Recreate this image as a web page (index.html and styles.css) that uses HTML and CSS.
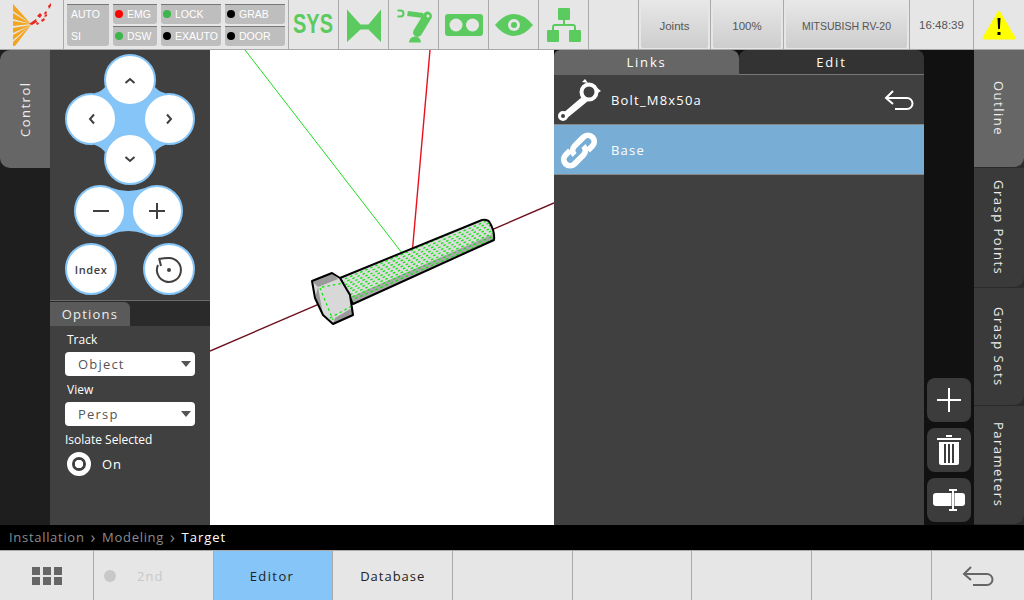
FILE: index.html
```html
<!DOCTYPE html>
<html lang="en">
  <head>
    <meta charset="UTF-8" />
    <title>Modeling - Target</title>
    <link rel="stylesheet" href="styles.css">
  </head>
  <body>
    <header class="topbar">
      <div class="cell logo-cell">
        <svg width="63" height="49" viewBox="0 0 63 49">
          <g fill="#f3a51f">
            <path d="M31 24 13 4v7z" />
            <path d="M31 24 13 13v6z" />
            <path d="M31 24 13 21v5z" />
            <path d="M31 25 13 28v5z" />
            <path d="M31 25 13 35v5z" />
            <path d="M31 25 13 42v4l2 0z" />
          </g>
          <g fill="#e8281f">
            <path d="M29 24l7-5 1 3-5 3z" />
            <path d="M37 16l3-3 2 2-2 3z" />
            <path d="M41 20l3-2 1 2-3 2z" />
            <path d="M44 13l2-2 1 2-2 2z" />
            <path d="M48 6l3-3 0 3-2 3z" />
            <path d="M36 23l2-1 1 2-2 1z" />
            <path d="M44 16l3-2 0 2-2 1z" />
          </g>
        </svg>
      </div>
      <div class="cell status-cell">
        <div class="chip chip-tall"><span>AUTO</span><span>SI</span></div>
        <div class="chip"><i class="led red"></i>EMG</div>
        <div class="chip"><i class="led green"></i>LOCK</div>
        <div class="chip"><i class="led black"></i>GRAB</div>
        <div class="chip"><i class="led green"></i>DSW</div>
        <div class="chip"><i class="led black"></i>EXAUTO</div>
        <div class="chip"><i class="led black"></i>DOOR</div>
      </div>
      <div class="cell sys-cell"><span>SYS</span></div>
      <div class="cell icon-cell">
        <svg width="40" height="40" viewBox="0 0 40 40">
          <path fill="#5ccb5f" d="M3 4.500 16.500 19.500h8L37 4.500V37L24.500 24.500h-8L3 37z" />
        </svg>
      </div>
      <div class="cell icon-cell">
        <svg width="40" height="40" viewBox="0 0 40 40" fill="#5ccb5f">
          <path fill="none" stroke="#5ccb5f" stroke-width="2" d="M3.500 5.500h3a3 3 0 0 1 0 6h-3" />
          <path stroke="#5ccb5f" stroke-width="5" d="M13.500 8.500 29 10.500" />
          <path stroke="#5ccb5f" stroke-width="9" stroke-linecap="round" d="M33.500 11 23.500 27.500" />
          <path d="M15 37.500a6 6 0 0 1 12 0z" />
          <circle cx="34" cy="11" r="1.500" fill="#e6e6e6" />
        </svg>
      </div>
      <div class="cell icon-cell">
        <svg width="40" height="40" viewBox="0 0 40 40">
          <rect x="1" y="9" width="38" height="22" rx="3" fill="#5ccb5f" />
          <circle cx="12" cy="20" r="6.500" fill="#e6e6e6" />
          <circle cx="28.500" cy="20" r="6.500" fill="#e6e6e6" />
        </svg>
      </div>
      <div class="cell icon-cell">
        <svg width="40" height="40" viewBox="0 0 40 40">
          <path fill="#5ccb5f" d="M1 20Q10 9 20 9T39 20Q30 31 20 31T1 20z" />
          <circle cx="20" cy="20" r="6" fill="#e6e6e6" />
          <circle cx="20" cy="20" r="3" fill="#5ccb5f" />
        </svg>
      </div>
      <div class="cell icon-cell">
        <svg width="40" height="40" viewBox="0 0 40 40" fill="#5ccb5f">
          <rect x="14" y="3" width="12" height="12" rx="1" />
          <rect x="3" y="25" width="12" height="12" rx="1" />
          <rect x="25" y="25" width="12" height="12" rx="1" />
          <path fill="none" stroke="#5ccb5f" stroke-width="2" d="M20 15v5M9 25v-3a2 2 0 0 1 2-2h18a2 2 0 0 1 2 2v3" />
        </svg>
      </div>
      <div class="cell blank-cell"></div>
      <div class="cell grad-wrap w-joints"><div class="grad-btn">Joints</div></div>
      <div class="cell grad-wrap w-speed"><div class="grad-btn">100%</div></div>
      <div class="cell grad-wrap w-robot"><div class="grad-btn">MITSUBISH RV-20</div></div>
      <div class="cell clock-cell">16:48:39</div>
      <div class="cell warn-cell">
        <svg width="36" height="32" viewBox="0 0 36 32">
          <path fill="#ffff00" stroke="#ffff00" stroke-width="3" stroke-linejoin="round" d="M18 3.500 33 29H3z" />
          <path fill="#000" d="M16.500 9h3l-.6 11h-1.800zM16.500 23h3v3h-3z" />
        </svg>
      </div>
    </header>

    <main class="main">
      <div class="side-tabs left-tabs">
        <div class="vtab active flip">Control</div>
      </div>

      <section class="control-panel">
        <svg class="pad" width="160" height="250" viewBox="50 50 160 250">
          <path fill="#85c5f8" d="M105 87Q101 92 95 93L95 145Q101 147 105 152L155 152Q159 147 165 145L165 93Q159 92 155 87z" />
          <path fill="#85c5f8" d="M112 188Q128 194 145 188L145 234Q128 228 112 234z" />
          <g fill="#fff" stroke="#85c5f8" stroke-width="2">
            <circle cx="130" cy="80" r="25" />
            <circle cx="91" cy="119" r="25" />
            <circle cx="169" cy="119" r="25" />
            <circle cx="130" cy="159" r="25" />
            <circle cx="100" cy="211" r="25" />
            <circle cx="157" cy="211" r="25" />
            <circle cx="91" cy="269" r="25" />
            <circle cx="169" cy="269" r="25" />
          </g>
          <g fill="none" stroke="#404040" stroke-width="2">
            <path d="M125.500 83l4.500-4 4.500 4" />
            <path d="M94 114.500l-4 4.500 4 4.500" />
            <path d="M167 114.500l4 4.500-4 4.500" />
            <path d="M125.500 157l4.500 4 4.500-4" />
            <path d="M93 211h16M157 203v16M149 211h16" />
            <path d="M159 259Q164 258 169 258A12 12 0 1 1 158 265M159 258 161 266" />
          </g>
          <circle cx="169" cy="270" r="2" fill="#404040" />
          <text class="pad-label" x="91" y="274" text-anchor="middle">Index</text>
        </svg>

        <div class="options">
          <div class="options-head"><span class="options-tab">Options</span></div>
          <div class="options-body">
            <div class="opt-label">Track</div>
            <div class="select"><span>Object</span><i class="caret"></i></div>
            <div class="opt-label">View</div>
            <div class="select"><span>Persp</span><i class="caret"></i></div>
            <div class="opt-label iso">Isolate Selected</div>
            <div class="radio-row"><i class="radio"></i><span>On</span></div>
          </div>
        </div>
      </section>

      <section class="viewport">
        <svg width="344" height="475" viewBox="210 50 344 475">
          <defs>
            <clipPath id="shaft">
              <path d="M340 278 482 220Q488 219 490 223 495 232 494 240L353 304z" />
            </clipPath>
          </defs>
          <path d="M210 351 554 203" stroke="#6d0f1e" stroke-width="1.400" />
          <path d="M245 50 402 253" stroke="#1fdc1f" />
          <path d="M430 50 412 255" stroke="#e8101c" stroke-width="1.400" />
          <path d="M340 278 482 220Q488 219 490 223 495 232 494 240L353 304z" fill="#dcdcdc" />
          <path d="M353 304 494 240 493 234 351 297z" fill="#a8a8a8" />
          <g clip-path="url(#shaft)" class="mesh">
            <path class="dash-a" d="M340 281 495 214.400M340 287 495 220.400M340 293 495 226.400M340 299 495 232.400M340 305 495 238.400" />
            <path class="dash-b" d="M340 284 495 217.400M340 290 495 223.400M340 296 495 229.400M340 302 495 235.400" />
          </g>
          <path d="M340 278 482 220Q488 219 490 223 495 232 494 240L353 304z" fill="none" stroke="#000" stroke-width="2" stroke-linejoin="round" />
          <path d="M312 281 332 273 340 278 350 295 353 315 333 324 323 315 315 298z" fill="#d8d8d8" />
          <path d="M312 281 332 273 338 279 318 287zM323 315 318 287 315 298zM333 324 353 315 352 308 335 318z" fill="#9a9a9a" />
          <g class="mesh">
            <path class="dash-a" d="M320 288 333 320M322 287 344 283M330 318 352 306" />
          </g>
          <path d="M312 281 332 273 340 278 350 295 353 315 333 324 323 315 315 298z" fill="none" stroke="#000" stroke-width="2" stroke-linejoin="round" />
        </svg>
      </section>

      <section class="links-panel">
        <div class="link-tabs">
          <div class="link-tab on">Links</div>
          <div class="link-tab off">Edit</div>
        </div>
        <div class="link-row">
          <svg class="row-icon" width="46" height="46" viewBox="0 0 46 46">
            <circle cx="33" cy="15" r="7.500" fill="none" stroke="#fff" stroke-width="4" />
            <path fill="#fff" d="M26 5l3-3 3 4zM40 10l5 4-5 3zM26 20l6 4L10 42l-4-5z" />
            <circle cx="7" cy="39" r="3.500" fill="#404040" stroke="#fff" stroke-width="3" />
          </svg>
          <span class="row-name">Bolt_M8x50a</span>
          <svg class="back" width="30" height="22" viewBox="0 0 30 22">
            <path fill="none" stroke="#fff" stroke-width="2" d="M9 2 2 9l7 6M2 9h21a5.500 5.500 0 0 1 0 11H11" />
          </svg>
        </div>
        <div class="link-row selected">
          <svg class="row-icon" width="46" height="46" viewBox="0 0 46 46">
            <g transform="translate(23 23.500) rotate(-45) scale(1.050)" fill="none" stroke="#fff" stroke-width="5.500">
              <path d="M-6 -6H-12a6 6 0 0 0 0 12H0a6 6 0 0 0 6-6" />
              <path d="M6 6H12a6 6 0 0 0 0-12H0a6 6 0 0 0-6 6" />
            </g>
          </svg>
          <span class="row-name">Base</span>
        </div>
      </section>

      <aside class="tool-col">
        <button class="tool">
          <svg width="28" height="28" viewBox="0 0 28 28">
            <path stroke="#fff" stroke-width="2" d="M14 2v24M2 14h24" />
          </svg>
        </button>
        <button class="tool">
          <svg width="28" height="32" viewBox="0 0 28 32" fill="#fff">
            <path d="M11 1h6v2h-6zM2 4h24v2H2z" />
            <path d="M4 8h20v21a2 2 0 0 1-2 2H6a2 2 0 0 1-2-2z" />
            <path fill="#3c3c3c" d="M9 10h2v19H9zM13 10h2v19h-2zM17 10h2v19h-2z" />
          </svg>
        </button>
        <button class="tool">
          <svg width="34" height="24" viewBox="0 0 34 24">
            <rect x="1" y="5" width="32" height="13" rx="3" fill="#fff" />
            <path stroke="#3c3c3c" stroke-width="3" d="M21 2v20" />
            <path stroke="#fff" stroke-width="2" d="M17 2h8M17 22h8M21 2v20" />
          </svg>
        </button>
      </aside>

      <div class="side-tabs right-tabs">
        <div class="vtab active h-outline">Outline</div>
        <div class="vtab h-points">Grasp Points</div>
        <div class="vtab h-sets">Grasp Sets</div>
        <div class="vtab h-params">Parameters</div>
      </div>
    </main>

    <div class="crumbs">
      <span>Installation</span><b>›</b><span>Modeling</span><b>›</b><span class="here">Target</span>
    </div>

    <footer class="bottombar">
      <div class="bcell">
        <svg width="30" height="20" viewBox="0 0 30 20" fill="#666">
          <path d="M0 1h8v8H0zM11 1h8v8h-8zM22 1h8v8h-8zM0 11h8v8H0zM11 11h8v8h-8zM22 11h8v8h-8z" />
        </svg>
      </div>
      <div class="bcell second"><i class="dot"></i><span>2nd</span></div>
      <div class="bcell on">Editor</div>
      <div class="bcell">Database</div>
      <div class="bcell"></div>
      <div class="bcell"></div>
      <div class="bcell"></div>
      <div class="bcell"></div>
      <div class="bcell last">
        <svg width="32" height="22" viewBox="0 0 32 22">
          <path fill="none" stroke="#666" stroke-width="2" d="M9 2 2 9l7 6M2 9h23a5.500 5.500 0 0 1 0 11H11" />
        </svg>
      </div>
    </footer>
  </body>
</html>
```

FILE: styles.css
```css
html, body {
  margin: 0;
  padding: 0;
}

body {
  width: 1024px;
  height: 600px;
  overflow: hidden;
  display: flex;
  flex-direction: column;
  font-family: "Open Sans", sans-serif;
  background: #000;
}

/* top bar */
.topbar {
  height: 49px;
  flex: none;
  display: flex;
  background: #e6e6e6;
  border-bottom: 1px solid #a8a8a8;
  font-family: "Liberation Sans", sans-serif;
}

.cell {
  flex: none;
  box-sizing: border-box;
  width: 50px;
  height: 49px;
  border-right: 1px solid #aaa;
  display: flex;
  align-items: center;
  justify-content: center;
}

.logo-cell { width: 64px; }

.status-cell {
  width: 225px;
  display: grid;
  grid-template-columns: 42px 44px 60px 60px;
  grid-template-rows: 20px 20px;
  column-gap: 4px;
  row-gap: 2px;
  align-items: stretch;
  align-content: center;
  justify-content: center;
}

.chip {
  display: flex;
  align-items: center;
  gap: 4px;
  padding-left: 2px;
  background: #bebebe;
  border-top: 1px solid #777;
  border-radius: 0 0 3px 3px;
  box-sizing: border-box;
  color: #fff;
  font-size: 10.500px;
}

.chip-tall {
  grid-row: 1 / 3;
  flex-direction: column;
  align-items: flex-start;
  justify-content: space-around;
  padding-left: 4px;
}

.led {
  width: 8px;
  height: 8px;
  border-radius: 50%;
  flex: none;
}
.led.red { background: #f00; }
.led.green { background: #3cb54a; }
.led.black { background: #000; }

.sys-cell {
  color: #5ccb5f;
  font-size: 27px;
  font-weight: bold;
}

.sys-cell span {
  display: inline-block;
  transform: scaleX(0.74);
}

.blank-cell { width: 50px; }

.grad-wrap {
  padding: 0 2px 1px 2px;
  font-size: 11.500px;
  color: #555;
}
.w-joints { width: 72px; }
.w-speed { width: 73px; }
.w-robot { width: 126px; font-size: 10.500px; }

.grad-btn {
  width: 100%;
  height: 100%;
  display: flex;
  align-items: center;
  justify-content: center;
  background: linear-gradient(#e8e8e8, #cdcdcd);
  border-radius: 2px;
  padding-top: 3px;
  box-sizing: border-box;
}

.clock-cell {
  width: 64px;
  font-size: 11.500px;
  color: #555;
}

.warn-cell {
  width: 50px;
  border-right: none;
}

/* main area */
.main {
  flex: none;
  height: 475px;
  display: flex;
}

.side-tabs {
  width: 50px;
  flex: none;
  display: flex;
  flex-direction: column;
  background: #1e1e1e;
}

.right-tabs { background: #2c2c2c; }

.vtab {
  box-sizing: border-box;
  display: flex;
  align-items: center;
  justify-content: center;
  background: #3a3a3a;
  color: #eee;
  font-size: 13px;
  letter-spacing: 1.5px;
  writing-mode: vertical-rl;
  border-radius: 0 0 10px 0;
  border-bottom: 1px solid #2a2a2a;
}

.vtab.active { background: #666; }

.vtab.flip {
  height: 118px;
  transform: rotate(180deg);
  border-radius: 0 10px 10px 0;
  border-bottom: none;
}

.h-outline { height: 118px; }
.h-points { height: 120px; }
.h-sets { height: 118px; }
.h-params { height: 119px; }

.control-panel {
  width: 160px;
  flex: none;
  display: flex;
  flex-direction: column;
  background: #404040;
}

.pad { display: block; flex: none; }

.pad-label {
  font-family: "Open Sans", sans-serif;
  font-size: 11px;
  font-weight: 600;
  letter-spacing: 0.6px;
  fill: #404040;
  stroke: none;
}

.options {
  flex: 1;
  color: #fff;
}

.options-head {
  height: 26px;
  box-sizing: border-box;
  border-top: 1px solid #6a6a6a;
  background: #2a2a2a;
  display: flex;
  align-items: flex-end;
}

.options-tab {
  width: 80px;
  height: 24px;
  background: #5a5a5a;
  border-radius: 0 6px 0 0;
  text-align: center;
  line-height: 25px;
  font-size: 13px;
  letter-spacing: 1.2px;
  color: #eee;
}

.options-body {
  padding: 6px 15px 0;
}

.opt-label {
  height: 20px;
  line-height: 15px;
  padding-left: 2px;
  font-size: 12px;
}

.opt-label.iso {
  padding-left: 0;
}

.select {
  height: 24px;
  background: #fff;
  border-radius: 4px;
  margin-bottom: 6px;
  display: flex;
  align-items: center;
  justify-content: space-between;
  padding: 0 4px 0 13px;
  color: #555;
  font-size: 13px;
  letter-spacing: 1.2px;
}

.caret {
  width: 0;
  height: 0;
  border-left: 5px solid transparent;
  border-right: 5px solid transparent;
  border-top: 6px solid #555;
}

.radio-row {
  display: flex;
  align-items: center;
  gap: 11px;
  padding-left: 2px;
  font-size: 13px;
  letter-spacing: 0.8px;
}

.radio {
  box-sizing: border-box;
  width: 24px;
  height: 24px;
  border: 5px solid #fff;
  border-radius: 50%;
  background: radial-gradient(circle, #fff 0 4px, #404040 4.500px);
}

.viewport {
  width: 344px;
  flex: none;
  background: #fff;
  overflow: hidden;
}

.viewport svg { display: block; }

/* green wireframe dots on the bolt */
.mesh path {
  fill: none;
  stroke: #0fe60f;
  stroke-width: 1.300;
  stroke-dasharray: 2.500 3;
}

.mesh .dash-b { stroke-dashoffset: 3; }

/* links list */
.links-panel {
  width: 370px;
  flex: none;
  background: #404040;
  color: #fff;
}

.link-tabs {
  display: flex;
  height: 25px;
  background: #111;
}

.link-tab {
  width: 185px;
  text-align: center;
  line-height: 25px;
  font-size: 13px;
  letter-spacing: 1.800px;
  box-sizing: border-box;
  border-bottom: 1px solid #777;
}

.link-tab.on {
  background: #666;
  border-radius: 6px 8px 0 0;
  border-bottom: none;
}

.link-tab.off {
  background: #333;
  border-radius: 8px 8px 0 0;
}

.link-row {
  height: 50px;
  box-sizing: border-box;
  display: flex;
  align-items: center;
  border-bottom: 1px solid #888;
  padding-left: 2px;
  font-size: 13px;
  letter-spacing: 1.200px;
}

.link-row.selected { background: #78add6; }

.row-icon { flex: none; }

.row-name { margin-left: 9px; }

.back { margin-left: auto; margin-right: 10px; }

.tool-col {
  width: 50px;
  flex: none;
  box-sizing: border-box;
  background: #111;
  display: flex;
  flex-direction: column;
  justify-content: flex-end;
  align-items: center;
  gap: 6px;
  padding-bottom: 3px;
}

.tool {
  width: 44px;
  height: 44px;
  padding: 0;
  border: none;
  border-radius: 8px;
  background: #3c3c3c;
  display: flex;
  align-items: center;
  justify-content: center;
}

/* breadcrumb */
.crumbs {
  height: 25px;
  flex: none;
  box-sizing: border-box;
  display: flex;
  align-items: center;
  gap: 6px;
  padding: 0 0 2px 9px;
  background: #000;
  color: #8c8c8c;
  font-size: 13px;
  letter-spacing: 0.7px;
}

.crumbs b {
  font-weight: normal;
  font-size: 16px;
  line-height: 16px;
}
.crumbs .here { color: #fff; letter-spacing: 1px; }

/* bottom bar */
.bottombar {
  height: 50px;
  flex: none;
  box-sizing: border-box;
  display: grid;
  grid-template-columns: 94px repeat(7, 119.700px) 1fr;
  background: #e6e6e6;
  border-top: 1px solid #aaa;
}

.bcell {
  box-sizing: border-box;
  display: flex;
  align-items: center;
  justify-content: center;
  border-right: 1px solid #aaa;
  color: #222;
  font-size: 13px;
  letter-spacing: 1px;
}

.bcell.on {
  background: #85c5f8;
  letter-spacing: 1.400px;
  padding-right: 2px;
}
.bcell.last { border-right: none; }

.second {
  justify-content: flex-start;
  padding-left: 10px;
  gap: 21px;
  color: #c8c8c8;
}

.dot {
  width: 12px;
  height: 12px;
  border-radius: 50%;
  background: #c8c8c8;
}
```
